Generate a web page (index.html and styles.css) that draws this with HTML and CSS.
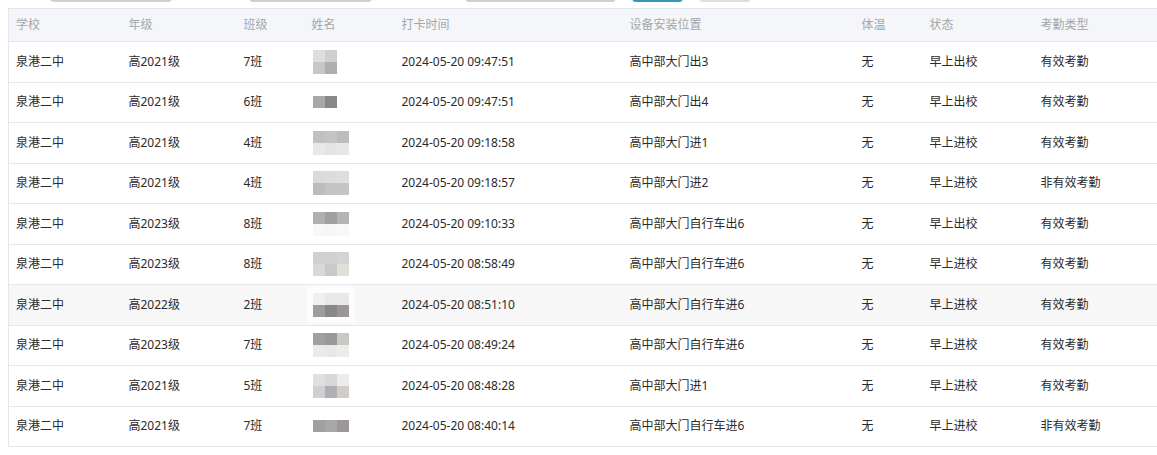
FILE: index.html
```html
<!DOCTYPE html>
<html lang="zh-CN">
<head>
<meta charset="utf-8">
<title>考勤记录</title>
<link rel="stylesheet" href="styles.css">
</head>
<body>
<div class="toolbar">
  <div class="ctl input w1"></div>
  <div class="ctl input w2"></div>
  <div class="ctl input w3"></div>
  <div class="ctl btn primary"></div>
  <div class="ctl btn plain"></div>
</div>
<table class="grid">
  <colgroup>
    <col class="c1"><col class="c2"><col class="c3"><col class="c4"><col class="c5"><col class="c6"><col class="c7"><col class="c8"><col class="c9">
  </colgroup>
  <thead>
    <tr><th>学校</th><th>年级</th><th>班级</th><th>姓名</th><th>打卡时间</th><th>设备安装位置</th><th>体温</th><th>状态</th><th>考勤类型</th></tr>
  </thead>
  <tbody>
    <tr><td>泉港二中</td><td>高2021级</td><td>7班</td><td class="name"><div class="mosaic"><i style="background:#e0dde0"></i><i style="background:#d0ced0"></i><i style="background:#c8c6c8"></i><i style="background:#b0aeb0"></i></div></td><td>2024-05-20 09:47:51</td><td>高中部大门出3</td><td>无</td><td>早上出校</td><td>有效考勤</td></tr>
    <tr><td>泉港二中</td><td>高2021级</td><td>6班</td><td class="name"><div class="mosaic"><i style="background:#a8a8a8"></i><i style="background:#888888"></i></div></td><td>2024-05-20 09:47:51</td><td>高中部大门出4</td><td>无</td><td>早上出校</td><td>有效考勤</td></tr>
    <tr><td>泉港二中</td><td>高2021级</td><td>4班</td><td class="name"><div class="mosaic three"><i style="background:#c0c0c0"></i><i style="background:#c4c4c4"></i><i style="background:#bcbcbc"></i><i style="background:#e8e8e8"></i><i style="background:#e4e4e4"></i><i style="background:#e8e6e6"></i></div></td><td>2024-05-20 09:18:58</td><td>高中部大门进1</td><td>无</td><td>早上进校</td><td>有效考勤</td></tr>
    <tr><td>泉港二中</td><td>高2021级</td><td>4班</td><td class="name"><div class="mosaic three"><i style="background:#dadada"></i><i style="background:#dcdcdc"></i><i style="background:#dedede"></i><i style="background:#bcbcbc"></i><i style="background:#c4c4c4"></i><i style="background:#c4c6c4"></i></div></td><td>2024-05-20 09:18:57</td><td>高中部大门进2</td><td>无</td><td>早上进校</td><td>非有效考勤</td></tr>
    <tr><td>泉港二中</td><td>高2023级</td><td>8班</td><td class="name"><div class="mosaic three"><i style="background:#b0b0b0"></i><i style="background:#a0a0a0"></i><i style="background:#b4b4b4"></i><i style="background:#f8f8f8"></i><i style="background:#f6f6f4"></i><i style="background:#f8f8f6"></i></div></td><td>2024-05-20 09:10:33</td><td>高中部大门自行车出6</td><td>无</td><td>早上出校</td><td>有效考勤</td></tr>
    <tr><td>泉港二中</td><td>高2023级</td><td>8班</td><td class="name"><div class="mosaic three"><i style="background:#d0d0d0"></i><i style="background:#d0d0d0"></i><i style="background:#d4d4d4"></i><i style="background:#d8d8d8"></i><i style="background:#c8cac8"></i><i style="background:#e0e0d8"></i></div></td><td>2024-05-20 08:58:49</td><td>高中部大门自行车进6</td><td>无</td><td>早上进校</td><td>有效考勤</td></tr>
    <tr class="hover"><td>泉港二中</td><td>高2022级</td><td>2班</td><td class="name"><div class="mosaic three"><i style="background:#f0f0f0"></i><i style="background:#e8e8e8"></i><i style="background:#e8e8e8"></i><i style="background:#9a9ea0"></i><i style="background:#888888"></i><i style="background:#9a9696"></i></div></td><td>2024-05-20 08:51:10</td><td>高中部大门自行车进6</td><td>无</td><td>早上进校</td><td>有效考勤</td></tr>
    <tr><td>泉港二中</td><td>高2023级</td><td>7班</td><td class="name"><div class="mosaic three"><i style="background:#a0a0a4"></i><i style="background:#989898"></i><i style="background:#c8c8c4"></i><i style="background:#e8eaee"></i><i style="background:#e8e8e8"></i><i style="background:#ecece8"></i></div></td><td>2024-05-20 08:49:24</td><td>高中部大门自行车进6</td><td>无</td><td>早上进校</td><td>有效考勤</td></tr>
    <tr><td>泉港二中</td><td>高2021级</td><td>5班</td><td class="name"><div class="mosaic three"><i style="background:#e0e0e0"></i><i style="background:#d8d8dc"></i><i style="background:#ececec"></i><i style="background:#d0d0d0"></i><i style="background:#b0b0b4"></i><i style="background:#d0ccc8"></i></div></td><td>2024-05-20 08:48:28</td><td>高中部大门进1</td><td>无</td><td>早上进校</td><td>有效考勤</td></tr>
    <tr><td>泉港二中</td><td>高2021级</td><td>7班</td><td class="name"><div class="mosaic three"><i style="background:#a0a0a4"></i><i style="background:#a8a8a8"></i><i style="background:#9c9898"></i></div></td><td>2024-05-20 08:40:14</td><td>高中部大门自行车进6</td><td>无</td><td>早上进校</td><td>非有效考勤</td></tr>
  </tbody>
</table>
</body>
</html>
```
FILE: styles.css
```css
html, body {
  margin: 0;
  padding: 0;
  overflow: hidden;
  background: #ffffff;
}
body {
  padding: 0 0 0 8px;
  font-family: "Noto Sans", "Noto Sans CJK SC", sans-serif;
  font-size: 12px;
  color: #2b2b2b;
}
.toolbar {
  display: flex;
  height: 8px;
  align-items: flex-end;
  margin-top: -6px;
  margin-bottom: 6px;
}
.ctl {
  height: 30px;
  border-radius: 4px;
  box-sizing: border-box;
  flex: none;
}
.input {
  border: 1px solid #cfcfcf;
  border-width: 0 1px 2px 1px;
}
.w1 { width: 122px; margin-left: 42px; }
.w2 { width: 123px; margin-left: 77px; }
.w3 { width: 151px; margin-left: 93px; }
.btn { border-bottom: 2px solid #d8d8d8; }
.primary { width: 51px; margin-left: 16px; border-bottom-color: #3596b5; background: transparent; }
.plain { width: 52px; margin-left: 16px; border-bottom-color: #dedede; }

.grid {
  border-collapse: collapse;
  table-layout: fixed;
  width: 1160px;
  border: 1px solid #e3e6ec;
}
.c1 { width: 112px; }
.c2 { width: 115px; }
.c3 { width: 68px; }
.c4 { width: 90px; }
.c5 { width: 228px; }
.c6 { width: 232px; }
.c7 { width: 68px; }
.c8 { width: 111px; }
.grid th {
  background: #f4f6f9;
  color: #a3a6ab;
  font-weight: normal;
  text-align: left;
  height: 32px;
  padding: 0 8px 0 7px;
  border-bottom: 1px solid #e3e6ec;
  line-height: 16px;
}
.grid td {
  height: 39.5px;
  padding: 0 8px 0 7px;
  border-bottom: 1px solid #e6e8eb;
  white-space: nowrap;
  line-height: 16px;
}
.grid td + td, .grid th + th { padding-left: 8px; }
.grid tr.hover td { background: #f7f7f7; }
.grid td.name { padding-left: 9px; }
.mosaic {
  display: grid;
  grid-template-columns: repeat(2, 12px);
  grid-auto-rows: 12px;
  width: max-content;
  box-shadow: 0 0 0 6px rgba(255,255,255,0.7);
}
.mosaic.three { grid-template-columns: repeat(3, 12px); }
.mosaic i { display: block; }
```
